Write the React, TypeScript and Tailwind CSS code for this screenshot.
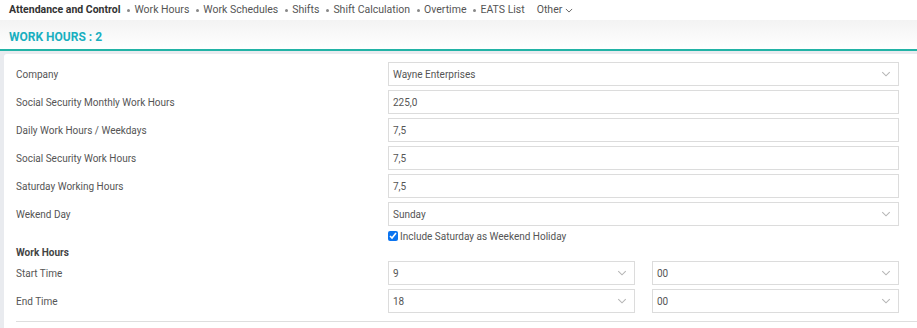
import React from 'react';

const navItems = ['Work Hours', 'Work Schedules', 'Shifts', 'Shift Calculation', 'Overtime', 'EATS List'];

const Chevron = ({ className }: { className?: string }) => (
  <svg className={className} viewBox="0 0 12 8" fill="none" stroke="currentColor" strokeWidth={1.4}>
    <path d="M1 1.5l5 5 5-5" />
  </svg>
);

const Select = ({ value, className = '' }: { value: string; className?: string }) => (
  <div className={`flex h-6 items-center justify-between border border-[#dcdcdc] bg-white pl-[4px] pr-[7px] ${className}`}>
    <span>{value}</span>
    <Chevron className="h-[6px] w-[10px] text-[#b5b5b5]" />
  </div>
);

const Input = ({ value }: { value: string }) => (
  <div className="flex h-6 items-center border border-[#dcdcdc] bg-white pl-[4px]">{value}</div>
);

const Row = ({ label, children }: { label: string; children: React.ReactNode }) => (
  <div className="grid grid-cols-[380px_511px] items-center">
    <div className="pl-[8px]">{label}</div>
    {children}
  </div>
);

export default function App() {
  return (
    <div className="h-[328px] w-[917px] overflow-hidden bg-[#e9ebef] text-[10px] text-[#555]" style={{ fontFamily: 'Roboto, "Noto Sans", sans-serif' }}>
      <div className="flex h-[20px] items-center bg-white pl-[9px] text-[10.5px] text-[#555]">
        <span className="font-bold text-[#333]">Attendance and Control</span>
        {navItems.map((item) => (
          <span key={item} className="ml-[7px] flex items-center">
            <span className="mr-[4px] inline-block h-[3px] w-[3px] rounded-full bg-[#888]" />
            {item}
          </span>
        ))}
        <span className="ml-[12px] flex items-center">
          Other
          <Chevron className="ml-[3px] h-[5px] w-[8px] text-[#555]" />
        </span>
      </div>
      <div className="h-[29px] bg-gradient-to-b from-[#f3f3f3] to-[#ffffff] pl-[9px] pt-[8px] text-[12px] font-bold text-[#19afc0]">
        WORK HOURS : 2
      </div>
      <div className="h-[2px] bg-[#22b3a6]" />
      <div className="pl-[4px] pt-[3px]">
        <div className="rounded-tl-[3px] bg-white pb-[6px] pl-[4px] pt-[8px]">
          <div className="flex flex-col gap-[4px]">
            <Row label="Company">
              <Select value="Wayne Enterprises" />
            </Row>
            <Row label="Social Security Monthly Work Hours">
              <Input value="225,0" />
            </Row>
            <Row label="Daily Work Hours / Weekdays">
              <Input value="7,5" />
            </Row>
            <Row label="Social Security Work Hours">
              <Input value="7,5" />
            </Row>
            <Row label="Saturday Working Hours">
              <Input value="7,5" />
            </Row>
            <Row label="Wekend Day">
              <Select value="Sunday" />
            </Row>
          </div>
          <div className="grid h-[20px] grid-cols-[380px_511px] items-center">
            <div />
            <label className="flex items-center gap-[2px]">
              <input type="checkbox" defaultChecked className="m-0 h-[10px] w-[10px] accent-[#0b74f0]" />
              Include Saturday as Weekend Holiday
            </label>
          </div>
          <div className="flex h-[12px] items-center pl-[8px] font-bold text-[#444]">Work Hours</div>
          <div className="mt-[3px] flex flex-col gap-[4px]">
            <Row label="Start Time">
              <div className="grid grid-cols-2 gap-[17px]">
                <Select value="9" />
                <Select value="00" />
              </div>
            </Row>
            <Row label="End Time">
              <div className="grid grid-cols-2 gap-[17px]">
                <Select value="18" />
                <Select value="00" />
              </div>
            </Row>
          </div>
          <div className="ml-[8px] mt-[8px] h-px bg-[#dedede]" />
        </div>
      </div>
    </div>
  );
}
